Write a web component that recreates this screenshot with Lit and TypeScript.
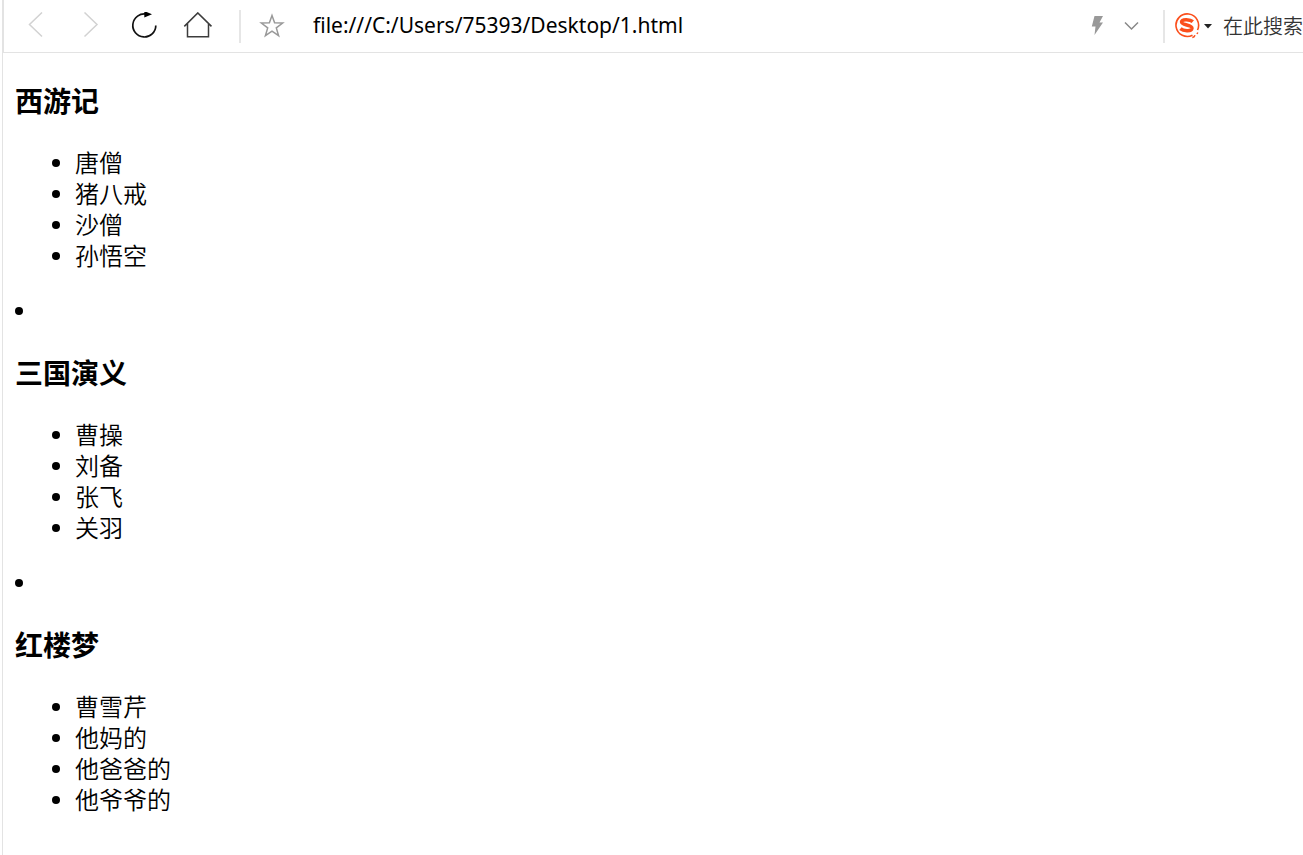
import { LitElement, html, css, svg } from "lit";
import { customElement, property } from "lit/decorators.js";

interface Book {
  title: string;
  people: string[];
}

const BOOKS: Book[] = [
  { title: "西游记", people: ["唐僧", "猪八戒", "沙僧", "孙悟空"] },
  { title: "三国演义", people: ["曹操", "刘备", "张飞", "关羽"] },
  { title: "红楼梦", people: ["曹雪芹", "他妈的", "他爸爸的", "他爷爷的"] },
];

@customElement("browser-toolbar")
export class BrowserToolbar extends LitElement {
  @property() address = "";

  static styles = css`
    :host {
      display: block;
      font-family: "Noto Sans", "Noto Sans CJK SC", sans-serif;
    }
    .bar {
      display: flex;
      align-items: center;
      height: 52px;
      padding-left: 5px;
      border-left: 1px solid #e3e3e3;
      border-bottom: 1px solid #e3e3e3;
      background: #fff;
    }
    button {
      display: flex;
      align-items: center;
      justify-content: center;
      flex: none;
      height: 40px;
      margin: 0;
      padding: 0;
      border: 0;
      background: none;
    }
    svg {
      display: block;
      fill: none;
    }
    .nav { width: 54px; }
    .star { width: 40px; margin-left: 11px; }
    .small { width: 34px; }
    .engine { width: 38px; gap: 4px; margin: 0 11px 0 9px; }
    .rule {
      flex: none;
      width: 2px;
      height: 33px;
      margin-left: 14px;
      background: #e6e6e6;
    }
    input {
      box-sizing: border-box;
      min-width: 0;
      height: 38px;
      margin: 0 0 2px;
      padding: 0;
      border: 0;
      outline: 0;
      background: none;
      font-family: inherit;
      color: #000;
    }
    .address {
      flex: 1;
      margin-left: 21px;
      font-size: 21px;
    }
    .search {
      flex: none;
      width: 80px;
      font-family: "Noto Sans CJK SC", sans-serif;
      font-size: 20px;
      font-weight: 350;
    }
    .search::placeholder {
      color: #333;
      opacity: 1;
    }
  `;

  render() {
    return html`
      <div class="bar">
        <button class="nav" aria-label="后退">
          <svg width="28" height="28" stroke="#d2d2d2" stroke-width="1.5">${svg`<path d="M20 0.500L7.500 12.500L20 24.500"/>`}</svg>
        </button>
        <button class="nav" aria-label="前进">
          <svg width="28" height="28" stroke="#d2d2d2" stroke-width="1.5">${svg`<path d="M8.500 0.500L21 12.500L8.500 24.500"/>`}</svg>
        </button>
        <button class="nav" aria-label="刷新">
          <svg width="28" height="28" stroke="#111" stroke-width="1.7">${svg`<path d="M16.500 2.200A11.500 11.500 0 1 0 25.800 13.500"/><path d="M14.300 -1L22 2.300L14.300 5.600Z" fill="#000" stroke="none"/>`}</svg>
        </button>
        <button class="nav" aria-label="主页">
          <svg width="30" height="28" stroke="#3c3c3c" stroke-width="1.5">${svg`<path d="M1.300 14.400L14.800 0.900L28.500 14.400M4.500 11.800V24.800H25.500V11.800"/>`}</svg>
        </button>
        <span class="rule"></span>
        <button class="star" aria-label="收藏">
          <svg width="26" height="26" stroke="#999" stroke-width="1.5">${svg`<path d="M13 2.500L15.600 9.800L23.700 10L17.300 14.900L19.600 22.700L13 18.200L6.400 22.700L8.700 14.900L2.300 10L10.400 9.800Z"/>`}</svg>
        </button>
        <input class="address" aria-label="地址" spellcheck="false" .value=${this.address} />
        <button class="small" aria-label="极速模式">
          <svg width="14" height="20">${svg`<path d="M3.500 0H12L8.500 6.500H12L3.500 19L4.500 10.500H0.800Z" fill="#999"/>`}</svg>
        </button>
        <button class="small" aria-label="展开">
          <svg width="16" height="10" stroke="#888" stroke-width="1.5">${svg`<path d="M1 1.500L7.500 8L14 1.500"/>`}</svg>
        </button>
        <span class="rule"></span>
        <button class="engine" aria-label="搜索引擎">
          <svg width="26" height="26">${svg`
            <path d="M18.500 22.200A11.300 11.300 0 1 1 23.500 17" stroke="#fb4f1c" stroke-width="1.600"/>
            <path d="M23.800 19.500L23 21M21 22.200C20.500 23.500 19.500 24.300 18.300 24.500" stroke="#fb4f1c" stroke-width="1.500"/>
            <path d="M18.800 8.600C16.500 6.600 7.900 5.600 7.600 8.900C7.400 12.400 18.200 11.600 17.900 15.200C17.500 18.900 9.200 18 6.400 15.600" stroke="#fb4f1c" stroke-width="3.600"/>
          `}</svg>
          <svg width="8" height="5">${svg`<path d="M0 0H8L4 4.500Z" fill="#222"/>`}</svg>
        </button>
        <input class="search" aria-label="搜索" placeholder="在此搜索" />
      </div>
    `;
  }
}

@customElement("book-list")
export class BookList extends LitElement {
  @property({ attribute: false }) books: Book[] = [];

  static styles = css`
    :host {
      display: block;
      padding: 29px 12px;
      font-family: "Noto Sans CJK SC", sans-serif;
      font-size: 24px;
      line-height: 31px;
      color: #000;
    }
    h3 {
      margin: 0 0 28px;
      font-size: 28px;
      font-weight: 700;
      line-height: 37px;
    }
    ul {
      margin: 0;
      padding: 0;
      list-style: none;
    }
    .people {
      margin-bottom: 24px;
      padding-left: 37px;
    }
    .item {
      display: flex;
      align-items: center;
      gap: 15px;
      height: 31px;
      font-family: Lato, "Noto Sans CJK SC", sans-serif;
      font-weight: 350;
    }
    .item::before {
      content: "";
      flex: none;
      width: 8px;
      height: 8px;
      border-radius: 50%;
      background: #000;
    }
    .blank {
      margin-bottom: 28px;
    }
  `;

  render() {
    return this.books.map(
      (book, i) => html`
        ${i > 0 ? html`<ul><li class="item blank"></li></ul>` : ""}
        <h3>${book.title}</h3>
        <ul class="people">
          ${book.people.map((name) => html`<li class="item">${name}</li>`)}
        </ul>
      `
    );
  }
}

@customElement("app-root")
export class AppRoot extends LitElement {
  static styles = css`
    :host {
      display: block;
      padding-left: 2px;
      background: #fff;
    }
    .page {
      box-sizing: border-box;
      min-height: 100vh;
      border-left: 1px solid #e3e3e3;
    }
  `;

  render() {
    return html`
      <div class="page">
        <browser-toolbar address="file:///C:/Users/75393/Desktop/1.html"></browser-toolbar>
        <book-list .books=${BOOKS}></book-list>
      </div>
    `;
  }
}
